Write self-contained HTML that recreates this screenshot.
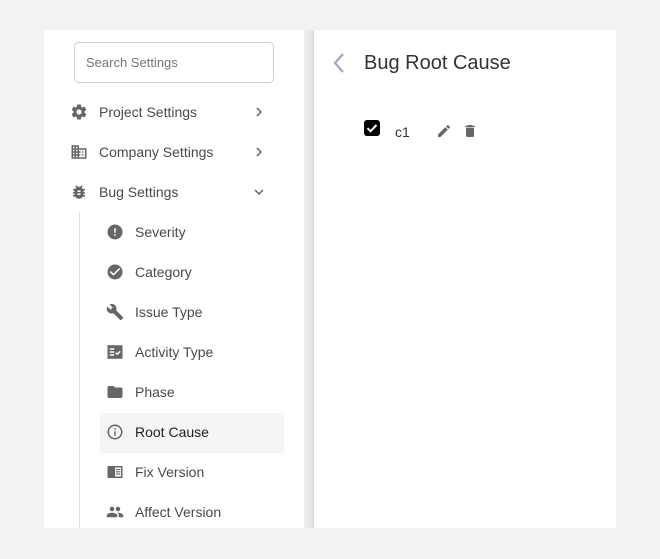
<!DOCTYPE html>
<html><head><meta charset="utf-8">
<style>
*{margin:0;padding:0;box-sizing:border-box}
body{width:660px;height:559px;background:#f2f2f2;font-family:"Liberation Sans",Arial,sans-serif;position:relative;overflow:hidden}
.panel{position:absolute;left:44px;top:30px;width:572px;height:498px;background:#fff}
.div{position:absolute;left:304px;top:30px;width:10px;height:498px;background:linear-gradient(90deg,#eee,#e6e6e6 80%,#d6d6d6)}
.search{position:absolute;left:74px;top:42px;width:200px;height:41px;border:1px solid #cfcfcf;border-radius:5px;font-size:13px;color:#777;padding:12px 0 0 11px}
.item{position:absolute;left:0;font-size:14px;color:#4a4a4a;height:20px;line-height:20px}
.item svg{position:absolute;top:1px}
.vline{position:absolute;left:79px;top:212px;width:1px;height:316px;background:#ddd}
.hl{position:absolute;left:100px;top:413px;width:184px;height:40px;background:#f5f5f5}
</style></head><body>
<div class="panel"></div>
<div class="div"></div>
<div class="search">Search Settings</div>

<div class="item" style="top:102px;left:70px;width:200px">
<svg width="18" height="18" viewBox="0 0 24 24" style="left:0"><path fill="#666" d="M19.4 13c.04-.32.06-.66.06-1s-.02-.68-.06-1l2.1-1.65c.2-.15.25-.42.12-.64l-2-3.46c-.12-.22-.39-.3-.61-.22l-2.49 1c-.52-.4-1.08-.73-1.69-.98l-.38-2.65A.49.49 0 0 0 14 2h-4c-.25 0-.46.18-.49.42l-.38 2.65c-.61.25-1.170.59-1.69.98l-2.49-1c-.23-.09-.49 0-.61.22l-2 3.460c-.13.22-.07.49.12.64L4.57 11c-.04.32-.07.66-.07 1s.03.68.07 1l-2.11 1.65c-.19.15-.24.42-.12.64l2 3.46c.12.22.39.3.61.22l2.49-1c.52.4 1.08.73 1.69.98l.38 2.65c.03.24.24.42.49.42h4c.25 0 .46-.18.49-.42l.38-2.65c.61-.25 1.17-.59 1.69-.98l2.49 1c.23.09.49 0 .61-.22l2-3.46c.12-.22.07-.49-.12-.64L19.4 13zM12 15.5A3.5 3.5 0 1 1 12 8.5a3.5 3.5 0 0 1 0 7z"/></svg>
<span style="position:absolute;left:29px;white-space:nowrap">Project Settings</span>
<svg width="18" height="18" viewBox="0 0 24 24" style="left:180px;top:1px"><path d="M8.6 16.6 13.2 12 8.6 7.4 10 6l6 6-6 6z" fill="#666"/></svg>
</div>
<div class="item" style="top:142px;left:70px;width:200px">
<svg width="18" height="18" viewBox="0 0 24 24" style="left:0"><path fill="#666" d="M12 7V3H2v18h20V7H12zM6 19H4v-2h2v2zm0-4H4v-2h2v2zm0-4H4V9h2v2zm0-4H4V5h2v2zm4 12H8v-2h2v2zm0-4H8v-2h2v2zm0-4H8V9h2v2zm0-4H8V5h2v2zm10 12h-8v-2h2v-2h-2v-2h2v-2h-2V9h8v10zm-2-8h-2v2h2v-2zm0 4h-2v2h2v-2z"/></svg>
<span style="position:absolute;left:29px;white-space:nowrap">Company Settings</span>
<svg width="18" height="18" viewBox="0 0 24 24" style="left:180px;top:1px"><path d="M8.6 16.6 13.2 12 8.6 7.4 10 6l6 6-6 6z" fill="#666"/></svg>
</div>
<div class="item" style="top:182px;left:70px;width:200px">
<svg width="18" height="18" viewBox="0 0 24 24" style="left:0"><path fill="#666" d="M20 8h-2.81a5.985 5.985 0 0 0-1.82-1.96L17 4.41 15.59 3l-2.17 2.17a6.002 6.002 0 0 0-2.83 0L8.41 3 7 4.41l1.62 1.63C7.88 6.550 7.26 7.22 6.81 8H4v2h2.09c-.05.33-.09.66-.09 1v1H4v2h2v1c0 .34.04.67.09 1H4v2h2.81c1.04 1.79 2.97 3 5.19 3s4.15-1.21 5.19-3H20v-2h-2.090c.05-.33.09-.66.09-1v-1h2v-2h-2v-1c0-.34-.04-.67-.09-1H20V8zm-6 8h-4v-2h4v2zm0-4h-4v-2h4v2z"/></svg>
<span style="position:absolute;left:29px;white-space:nowrap">Bug Settings</span>
<svg width="18" height="18" viewBox="0 0 24 24" style="left:180px;top:1px"><path d="M7.4 8.6 12 13.2l4.6-4.6L18 10l-6 6-6-6z" fill="#666"/></svg>
</div>
<div class="vline"></div>
<div class="hl"></div>

<div class="item" style="top:222px;left:106px"><svg width="18" height="18" viewBox="0 0 24 24" style="left:0"><path fill="#666" d="M12 2a10 10 0 1 0 0 20 10 10 0 0 0 0-20zm1 15h-2v-2h2v2zm0-4h-2V7h2v6z"/></svg><span style="position:absolute;left:29px;white-space:nowrap">Severity</span></div>
<div class="item" style="top:262px;left:106px"><svg width="18" height="18" viewBox="0 0 24 24" style="left:0"><path fill="#666" d="M12 2a10 10 0 1 0 0 20 10 10 0 0 0 0-20zm-2 15-5-5 1.41-1.41L10 14.17l7.59-7.59L19 8l-9 9z"/></svg><span style="position:absolute;left:29px;white-space:nowrap">Category</span></div>
<div class="item" style="top:302px;left:106px"><svg width="18" height="18" viewBox="0 0 24 24" style="left:0"><path fill="#666" d="M22.7 19 13.6 9.9c.9-2.3.4-5-1.5-6.9-2-2-5-2.4-7.4-1.3L9 6 6 9 1.6 4.7C.4 7.1.9 10.1 2.9 12.1c1.9 1.9 4.6 2.4 6.9 1.5l9.1 9.1c.4.4 1 .4 1.4 0l2.3-2.3c.5-.4.5-1.1.1-1.4z"/></svg><span style="position:absolute;left:29px;white-space:nowrap">Issue Type</span></div>
<div class="item" style="top:342px;left:106px"><svg width="18" height="18" viewBox="0 0 24 24" style="left:0"><path fill="#666" d="M2 3h20v18H2z"/><path fill="#fff" d="M5 7h6v2H5zM5 11h6v2H5zM5 15h6v2H5z"/><path fill="none" stroke="#fff" stroke-width="1.8" d="M13 13l2 2 4-4"/></svg><span style="position:absolute;left:29px;white-space:nowrap">Activity Type</span></div>
<div class="item" style="top:382px;left:106px"><svg width="18" height="18" viewBox="0 0 24 24" style="left:0"><path fill="#666" d="M10 4H4c-1.1 0-2 .9-2 2v12c0 1.1.9 2 2 2h16c1.1 0 2-.9 2-2V8c0-1.1-.9-2-2-2h-8l-2-2z"/></svg><span style="position:absolute;left:29px;white-space:nowrap">Phase</span></div>
<div class="item" style="top:422px;left:106px"><svg width="18" height="18" viewBox="0 0 24 24" style="left:0"><circle cx="12" cy="12" r="9" fill="none" stroke="#666" stroke-width="2"/><path fill="#666" d="M11 11h2v6h-2zM11 7h2v2h-2z"/></svg><span style="position:absolute;left:29px;white-space:nowrap;color:#222">Root Cause</span></div>
<div class="item" style="top:462px;left:106px"><svg width="18" height="18" viewBox="0 0 24 24" style="left:0"><path fill="#666" d="M3 4h18c.6 0 1 .4 1 1v14c0 .6-.4 1-1 1H3c-.6 0-1-.4-1-1V5c0-.6.4-1 1-1z"/><path fill="#fff" d="M12 6h8v12h-8z"/><path fill="#666" d="M13 8h6v1.5h-6zM13 11h6v1.5h-6zM13 14h6v1.5h-6z"/></svg><span style="position:absolute;left:29px;white-space:nowrap">Fix Version</span></div>
<div class="item" style="top:502px;left:106px"><svg width="18" height="18" viewBox="0 0 24 24" style="left:0"><path fill="#666" d="M16 11c1.66 0 3-1.34 3-3s-1.34-3-3-3-3 1.34-3 3 1.34 3 3 3zm-8 0c1.66 0 3-1.34 3-3S9.66 5 8 5 5 6.34 5 8s1.34 3 3 3zm0 2c-2.33 0-7 1.17-7 3.5V19h14v-2.5c0-2.33-4.67-3.5-7-3.5zm8 0c-.29 0-.62.02-.97.05 1.16.84 1.97 1.97 1.97 3.45V19h6v-2.5c0-2.33-4.67-3.5-7-3.5z"/></svg><span style="position:absolute;left:29px;white-space:nowrap">Affect Version</span></div>

<svg width="14" height="22" viewBox="0 0 14 22" style="position:absolute;left:332px;top:52px"><path d="M11 2 3 11l8 9" fill="none" stroke="#a5a5b5" stroke-width="2.2"/></svg>
<div style="position:absolute;left:364px;top:52px;font-size:20px;color:#333">Bug Root Cause</div>
<div style="position:absolute;left:364px;top:120px;width:16px;height:16px;background:#000;border-radius:3px"><svg width="16" height="16" viewBox="0 0 16 16"><path d="M3.5 8.2 6.6 11.2 12.5 5" fill="none" stroke="#fff" stroke-width="2"/></svg></div>
<div style="position:absolute;left:395px;top:124px;font-size:14px;color:#333">c1</div>
<svg width="16" height="16" viewBox="0 0 24 24" style="position:absolute;left:436px;top:123px"><path fill="#666" d="M3 17.25V21h3.75L17.81 9.94l-3.75-3.75L3 17.25zM20.71 7.04a1 1 0 0 0 0-1.41l-2.34-2.34a1 1 0 0 0-1.41 0l-1.83 1.83 3.75 3.75 1.83-1.83z"/></svg>
<svg width="16" height="16" viewBox="0 0 24 24" style="position:absolute;left:462px;top:123px"><path fill="#666" d="M6 19c0 1.1.9 2 2 2h8c1.1 0 2-.9 2-2V7H6v12zM19 4h-3.5l-1-1h-5l-1 1H5v2h14V4z"/></svg>
</body></html>
